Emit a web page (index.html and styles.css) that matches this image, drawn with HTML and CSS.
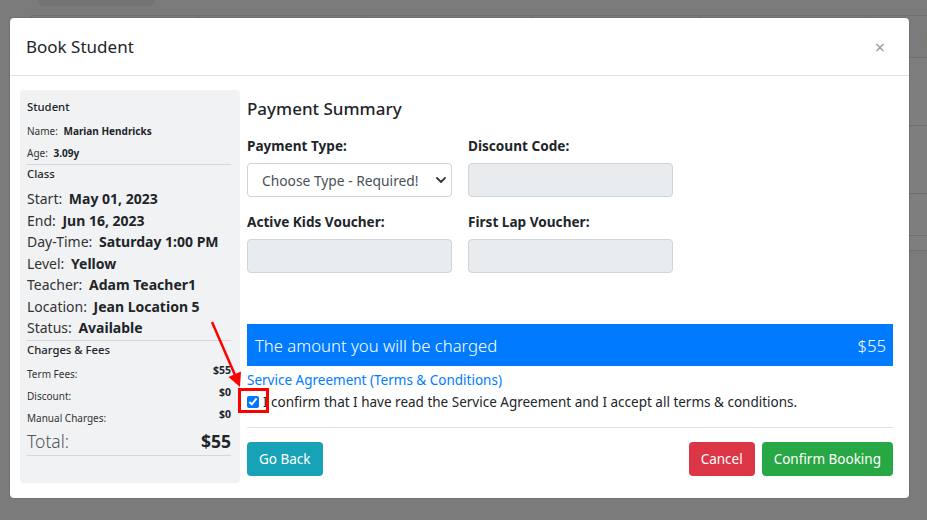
FILE: index.html
```html
<!DOCTYPE html>
<html lang="en">
<head>
    <meta charset="UTF-8">
    <meta name="viewport" content="width=device-width, initial-scale=1.0">
    <title>Book Student</title>
    <link rel="stylesheet" href="styles.css">
</head>
<body>
    <div class="page">
        <div class="page-tab"></div>
        <table class="page-table">
            <tr class="row-head"><td></td><td></td><td></td><td></td><td></td><td class="last-col">F</td></tr>
            <tr class="row-tall"><td></td><td></td><td></td><td></td><td></td><td></td></tr>
            <tr class="row-tall"><td></td><td></td><td></td><td></td><td></td><td></td></tr>
            <tr class="row-mid"><td></td><td></td><td></td><td></td><td></td><td></td></tr>
            <tr class="row-thin"><td></td><td></td><td></td><td></td><td></td><td></td></tr>
        </table>
    </div>

    <div class="backdrop">
        <div class="modal">
            <div class="modal-header">
                <h5 class="modal-title">Book Student</h5>
                <button class="close" type="button">&times;</button>
            </div>

            <div class="modal-body">
                <aside class="summary">
                    <div class="summary-title">Student</div>
                    <div class="summary-small first">Name: <b>Marian Hendricks</b></div>
                    <div class="summary-small">Age: <b>3.09y</b></div>
                    <hr class="summary-rule">
                    <div class="summary-title class-title">Class</div>
                    <div class="summary-big">Start: <b>May 01, 2023</b></div>
                    <div class="summary-big">End: <b>Jun 16, 2023</b></div>
                    <div class="summary-big">Day-Time: <b>Saturday 1:00 PM</b></div>
                    <div class="summary-big">Level: <b>Yellow</b></div>
                    <div class="summary-big">Teacher: <b>Adam Teacher1</b></div>
                    <div class="summary-big">Location: <b>Jean Location 5</b></div>
                    <div class="summary-big">Status: <b>Available</b></div>
                    <hr class="summary-rule status-rule">
                    <div class="summary-title class-title">Charges &amp; Fees</div>
                    <div class="fee-row first"><span>Term Fees:</span><b>$55</b></div>
                    <div class="fee-row"><span>Discount:</span><b>$0</b></div>
                    <div class="fee-row"><span>Manual Charges:</span><b>$0</b></div>
                    <div class="total-row"><span>Total:</span><b>$55</b></div>
                    <hr class="summary-rule">
                </aside>

                <main class="payment">
                    <h4 class="payment-title">Payment Summary</h4>

                    <div class="payment-grid">
                        <div class="field">
                            <label>Payment Type:</label>
                            <div class="select-box">
                                <span>Choose Type - Required!</span>
                                <svg width="10" height="6" viewBox="0 0 10 6"><path d="M1 1l4 4 4-4" fill="none" stroke="#343a40" stroke-width="1.8" stroke-linecap="round" stroke-linejoin="round"/></svg>
                            </div>
                        </div>
                        <div class="field">
                            <label>Discount Code:</label>
                            <div class="input-box"></div>
                        </div>
                        <div class="field">
                            <label>Active Kids Voucher:</label>
                            <div class="input-box"></div>
                        </div>
                        <div class="field">
                            <label>First Lap Voucher:</label>
                            <div class="input-box"></div>
                        </div>
                    </div>

                    <div class="charge-bar">
                        <span>The amount you will be charged</span>
                        <span>$55</span>
                    </div>

                    <a class="terms-link" href="#">Service Agreement (Terms &amp; Conditions)</a>
                    <label class="confirm-row">
                        <input type="checkbox" checked>
                        I confirm that I have read the Service Agreement and I accept all terms &amp; conditions.
                    </label>

                    <hr class="footer-rule">

                    <div class="button-row">
                        <button class="btn btn-info" type="button">Go Back</button>
                        <div class="button-group">
                            <button class="btn btn-danger" type="button">Cancel</button>
                            <button class="btn btn-success" type="button">Confirm Booking</button>
                        </div>
                    </div>
                </main>
            </div>
        </div>
    </div>

    <!-- screenshot annotation -->
    <div class="callout-box"></div>
    <svg class="callout-arrow" width="927" height="520" viewBox="0 0 927 520">
        <line x1="212" y1="322" x2="235" y2="375" stroke="#ff0000" stroke-width="2.5"/>
        <polygon points="240,387 241,371.5 228.5,377" fill="#ff0000"/>
    </svg>
</body>
</html>
```

FILE: styles.css
```css
:root {
    --text-dark: #212529;
    --text-muted: #495057;
    --border-color: #dee2e6;
    --input-border: #ced4da;
    --input-disabled: #e9ecef;
    --panel-bg: #f1f2f4;
    --primary: #007bff;
    --info: #17a2b8;
    --danger: #dc3545;
    --success: #28a745;
}

html, body {
    margin: 0;
    height: 100%;
    overflow: hidden;
}

body {
    font-family: 'Noto Sans', 'Open Sans', sans-serif;
    background-color: #7b7b7b;
    color: var(--text-dark);
    position: relative;
}

/* background page */
.page-tab {
    margin-left: 38px;
    width: 117px;
    height: 6px;
    background-color: #737373;
    border-radius: 0 0 6px 6px;
}

.page-table {
    margin: 9px 0 0 31px;
    border-collapse: collapse;
    table-layout: fixed;
    width: 996px;
}

.page-table td {
    width: 166px;
    border: 1px solid #6f6f6f;
    padding: 0;
    background-color: #7e7e7e;
}

.page-table .row-head td {
    height: 41px;
    background-color: #7b7b7b;
}

.page-table .row-tall td { height: 67px; }
.page-table .row-mid td { height: 41px; }
.page-table .row-thin td { height: 14px; }

.page-table .last-col {
    text-indent: 59px;
    font-size: 13px;
    color: #1c1c1c;
    vertical-align: middle;
}

/* modal */
.backdrop {
    position: absolute;
    inset: 0;
}

.modal {
    width: 899px;
    margin: 18px 0 0 10px;
    background-color: #ffffff;
    border-radius: 4px;
    box-shadow: 0 0 2px rgba(0, 0, 0, 0.25);
}

.modal-header {
    height: 57px;
    padding: 0 24px 0 16px;
    display: flex;
    align-items: center;
    justify-content: space-between;
    border-bottom: 1px solid var(--border-color);
}

.modal-title {
    margin: 0;
    font-size: 17px;
    font-weight: 400;
    line-height: 22px;
}

.close {
    border: none;
    background: none;
    padding: 0;
    font-family: inherit;
    font-size: 18px;
    line-height: 1;
    color: #9a9a9a;
    cursor: pointer;
}

.modal-body {
    display: flex;
    gap: 7px;
    padding: 14px 16px 15px 10px;
}

/* left summary panel */
.summary {
    width: 220px;
    flex-shrink: 0;
    box-sizing: border-box;
    padding: 8px 9px 27px 7px;
    background-color: var(--panel-bg);
    border-radius: 4px;
}

.summary b {
    font-weight: 700;
    color: var(--text-dark);
    margin-left: 3px;
}

.summary-title {
    font-size: 11.3px;
    font-weight: 500;
    line-height: 18px;
}

.class-title {
    line-height: 16px;
    margin-top: 1px;
}

.summary-small {
    font-size: 10px;
    line-height: 22px;
    color: #333333;
}

.summary-small.first {
    margin-top: 4px;
}

.summary-rule {
    margin: 0;
    border: none;
    border-top: 1px solid #d5d7da;
}

.status-rule {
    margin-top: 1px;
}

.summary-big {
    font-size: 14px;
    line-height: 21.5px;
    color: #333333;
}

.class-title + .summary-big {
    margin-top: 6px;
}

.fee-row {
    display: flex;
    justify-content: space-between;
    align-items: flex-start;
    height: 22px;
    font-size: 10px;
    line-height: 22px;
    color: #333333;
}

.fee-row.first {
    margin-top: 5px;
}

.fee-row b {
    font-size: 10.5px;
    line-height: 14px;
}

.total-row {
    display: flex;
    justify-content: space-between;
    align-items: center;
    height: 24px;
    margin-bottom: 2px;
    font-size: 17.5px;
}

.total-row span {
    font-weight: 300;
    color: #555555;
}

/* right payment column */
.payment {
    flex: 1;
}

.payment-title {
    margin: 8px 0 0;
    font-size: 17px;
    font-weight: 500;
    line-height: 22px;
}

.payment-grid {
    display: grid;
    grid-template-columns: 205px 205px;
    column-gap: 16px;
    row-gap: 15px;
    margin-top: 16px;
}

.field label {
    display: block;
    font-size: 13.6px;
    font-weight: 700;
    line-height: 19px;
    margin-bottom: 8px;
}

.select-box,
.input-box {
    height: 34px;
    box-sizing: border-box;
    border: 1px solid var(--input-border);
    border-radius: 4px;
}

.select-box {
    display: flex;
    align-items: center;
    justify-content: space-between;
    padding: 0 5px 0 14px;
    font-size: 13.8px;
    color: var(--text-muted);
    background-color: #ffffff;
}

.input-box {
    background-color: var(--input-disabled);
}

.charge-bar {
    margin-top: 51px;
    height: 42px;
    padding: 0 7px 0 8px;
    display: flex;
    align-items: center;
    justify-content: space-between;
    background-color: var(--primary);
    color: #ffffff;
    font-size: 16.7px;
    font-weight: 300;
}

.terms-link {
    display: block;
    margin-top: 4px;
    font-size: 13.5px;
    line-height: 20px;
    color: var(--primary);
    text-decoration: none;
}

.confirm-row {
    display: flex;
    align-items: center;
    gap: 4px;
    margin-top: 2px;
    font-size: 13.5px;
    line-height: 20px;
    color: var(--text-dark);
}

.confirm-row input {
    width: 12px;
    height: 12px;
    margin: 0;
    accent-color: #0075ff;
}

.footer-rule {
    margin: 15px 0 0;
    border: none;
    border-top: 1px solid var(--border-color);
}

.button-row {
    margin-top: 14px;
    display: flex;
    justify-content: space-between;
}

.button-group {
    display: flex;
    gap: 7px;
}

.btn {
    height: 34px;
    padding: 0 12px;
    border: none;
    border-radius: 4px;
    font-family: inherit;
    font-size: 13.5px;
    color: #ffffff;
    cursor: pointer;
}

.btn-info { background-color: var(--info); }
.btn-danger { background-color: var(--danger); }
.btn-success { background-color: var(--success); }

/* red annotation drawn on the screenshot */
.callout-box {
    position: absolute;
    left: 238px;
    top: 388px;
    width: 31px;
    height: 25px;
    box-sizing: border-box;
    border: 3px solid #ff0000;
}

.callout-arrow {
    position: absolute;
    left: 0;
    top: 0;
    pointer-events: none;
}
```
